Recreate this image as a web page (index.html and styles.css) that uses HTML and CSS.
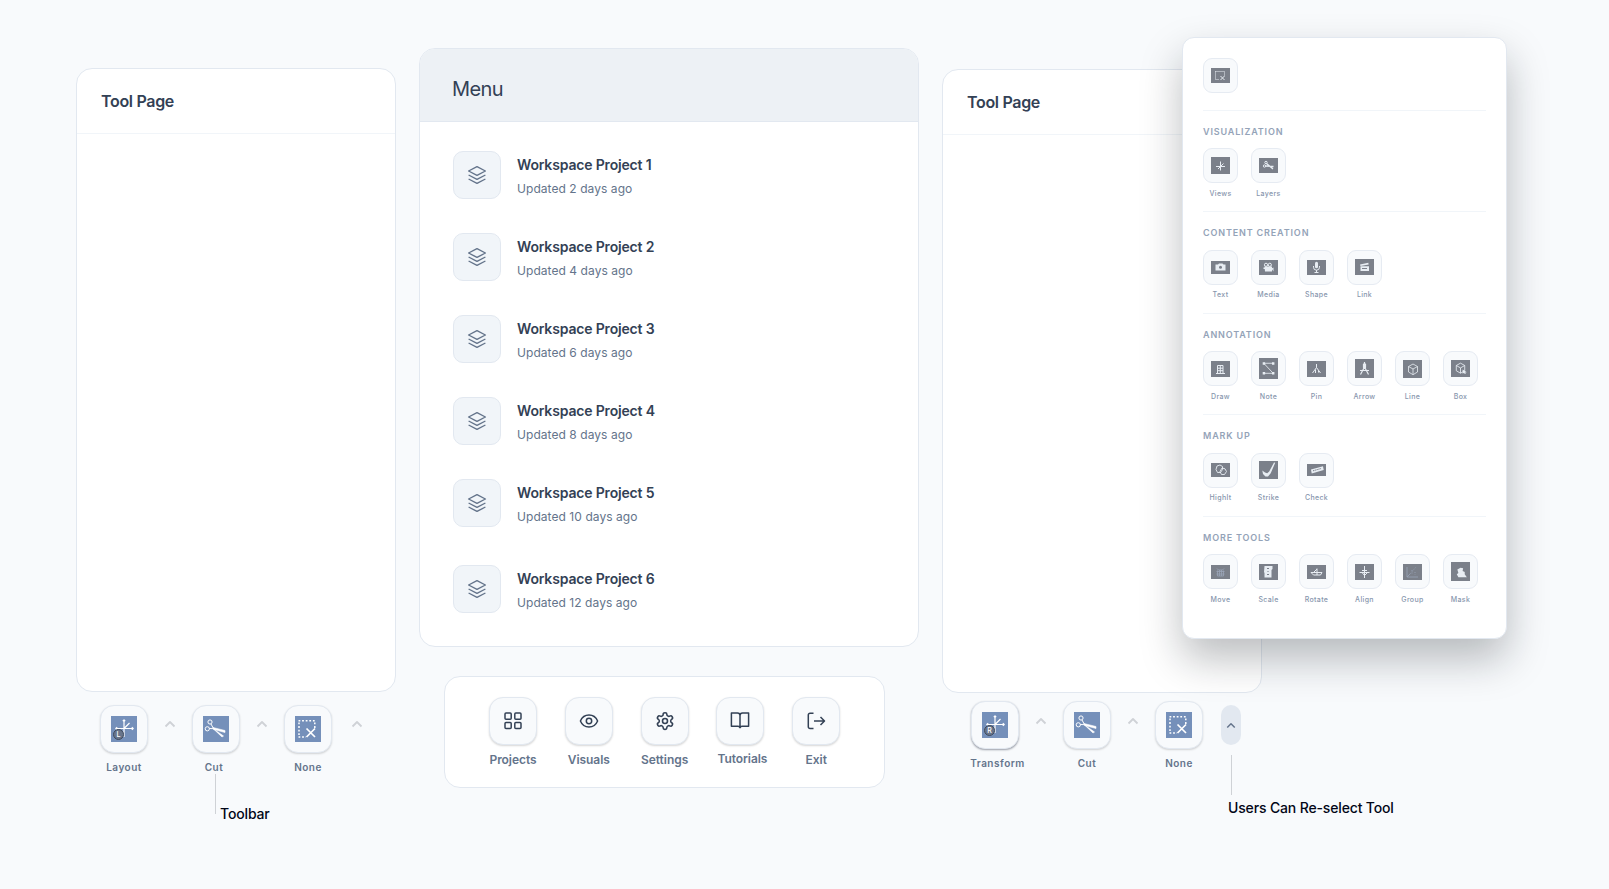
FILE: index.html
```html
<!DOCTYPE html>
<html lang="en">
<head>
  <meta charset="UTF-8">
  <title>Workspace Menu</title>
  <link rel="stylesheet" href="styles.css">
</head>
<body>

<svg class="sprite">
  <symbol id="stack" viewBox="0 0 20 20"><path d="M10 1.6 18.4 6 10 10.4 1.6 6ZM1.6 10 10 14.4 18.4 10M1.6 14 10 18.4 18.4 14"/></symbol>
  <symbol id="chevron" viewBox="0 0 12 8"><path d="M1.5 6.5 6 2l4.500 4.500"/></symbol>
  <symbol id="none" viewBox="0 0 26 26">
    <path d="M3.500 4.800H20.500M3.500 21H11M4 6.500V21M19.800 6.500V12" stroke-dasharray="1.800 1.800" stroke-width="1.5"/>
    <path d="M11.500 12.500 20 21M20 12.500 11.500 21" stroke-width="1.700"/>
  </symbol>
  <symbol id="scissors" viewBox="0 0 26 26">
    <circle cx="7" cy="6" r="2.100"/><circle cx="4.300" cy="12.800" r="2.100"/>
    <path d="M8 8 11 13.500M6.300 12.500 11 12.700"/>
    <path d="M10 11.500 22 14.500 22 16.500 11 13.500ZM10 12.500 20.500 20 19 21Z" fill="currentColor" stroke-width=".6"/>
  </symbol>
  <symbol id="axes" viewBox="0 0 26 26">
    <path stroke-width="1.200" d="M13 4V21M5 12.500H22M13 12.500 18.500 7M11.800 5.200 13 3.800l1.200 1.400M20.800 11.300l1.400 1.200-1.400 1.200M6.200 11.300 4.800 12.500l1.400 1.200"/>
  </symbol>
</svg>

<div class="board">

  <section class="column tool-left">
    <div class="panel tool-page"><h2>Tool Page</h2></div>
    <div class="toolbar">
      <div class="tool"><div class="key"><div class="tile"><svg><use href="#axes"/></svg><span class="hand">L</span></div></div><span class="name">Layout</span></div>
      <svg class="chevron"><use href="#chevron"/></svg>
      <div class="tool cut"><div class="key"><div class="tile"><svg><use href="#scissors"/></svg></div></div><span class="name">Cut</span></div>
      <svg class="chevron"><use href="#chevron"/></svg>
      <div class="tool"><div class="key"><div class="tile"><svg><use href="#none"/></svg></div></div><span class="name">None</span></div>
      <svg class="chevron last"><use href="#chevron"/></svg>
    </div>
    <div class="callout"><i></i><span>Toolbar</span></div>
  </section>

  <section class="column menu-column">
    <div class="panel menu">
      <h1>Menu</h1>
      <ul class="projects">
        <li><div class="thumb"><svg><use href="#stack"/></svg></div><div><h3>Workspace Project 1</h3><p>Updated 2 days ago</p></div></li>
        <li><div class="thumb"><svg><use href="#stack"/></svg></div><div><h3>Workspace Project 2</h3><p>Updated 4 days ago</p></div></li>
        <li><div class="thumb"><svg><use href="#stack"/></svg></div><div><h3>Workspace Project 3</h3><p>Updated 6 days ago</p></div></li>
        <li><div class="thumb"><svg><use href="#stack"/></svg></div><div><h3>Workspace Project 4</h3><p>Updated 8 days ago</p></div></li>
        <li><div class="thumb"><svg><use href="#stack"/></svg></div><div><h3>Workspace Project 5</h3><p>Updated 10 days ago</p></div></li>
        <li><div class="thumb"><svg><use href="#stack"/></svg></div><div><h3>Workspace Project 6</h3><p>Updated 12 days ago</p></div></li>
      </ul>
    </div>
    <nav class="panel dock">
      <a><div class="key"><svg viewBox="0 0 20 20"><rect x="2" y="2" width="6.200" height="6.200" rx="1"/><rect x="11.800" y="2" width="6.200" height="6.200" rx="1"/><rect x="2" y="11.400" width="6.200" height="6.200" rx="1"/><rect x="11.800" y="11.400" width="6.200" height="6.200" rx="1"/></svg></div><span>Projects</span></a>
      <a><div class="key"><svg viewBox="0 0 20 20"><path d="M1.400 10C3 6.200 6.200 4 10 4s7 2.200 8.600 6c-1.600 3.800-4.800 6-8.600 6s-7-2.200-8.600-6Z"/><circle cx="10" cy="10" r="2.700"/></svg></div><span>Visuals</span></a>
      <a><div class="key"><svg viewBox="0 0 24 24"><path stroke-width="1.900" d="M12.220 2h-.44a2 2 0 0 0-2 2v.18a2 2 0 0 1-1 1.730l-.43.25a2 2 0 0 1-2 0l-.15-.08a2 2 0 0 0-2.730.73l-.22.38a2 2 0 0 0 .73 2.730l.15.1a2 2 0 0 1 1 1.720v.51a2 2 0 0 1-1 1.740l-.15.09a2 2 0 0 0-.73 2.730l.22.38a2 2 0 0 0 2.730.73l.15-.08a2 2 0 0 1 2 0l.43.25a2 2 0 0 1 1 1.730V20a2 2 0 0 0 2 2h.44a2 2 0 0 0 2-2v-.18a2 2 0 0 1 1-1.730l.43-.25a2 2 0 0 1 2 0l.15.08a2 2 0 0 0 2.730-.73l.22-.39a2 2 0 0 0-.73-2.730l-.15-.08a2 2 0 0 1-1-1.740v-.5a2 2 0 0 1 1-1.740l.15-.09a2 2 0 0 0 .73-2.730l-.22-.38a2 2 0 0 0-2.730-.73l-.15.08a2 2 0 0 1-2 0l-.43-.25a2 2 0 0 1-1-1.730V4a2 2 0 0 0-2-2z"/><circle cx="12" cy="12" r="3" stroke-width="1.900"/></svg></div><span>Settings</span></a>
      <a class="tutorials"><div class="key"><svg viewBox="0 0 20 20"><path d="M10 4.500C10 3 9 2 7.500 2H1.400v13.300h6.400c1.300 0 2.200.8 2.200 2M10 4.500C10 3 11 2 12.500 2h6.100v13.300h-6.400c-1.300 0-2.200.8-2.200 2M10 4.500v12.800"/></svg></div><span>Tutorials</span></a>
      <a><div class="key"><svg viewBox="0 0 20 20"><path d="M7.500 17.500H4a1.700 1.700 0 0 1-1.700-1.700V3.900A1.700 1.700 0 0 1 4 2.200h3.500M8 10h10.200M14.500 6l4 4-4 4"/></svg></div><span>Exit</span></a>
    </nav>
  </section>

  <section class="column tool-right">
    <div class="panel tool-page"><h2>Tool Page</h2></div>
    <div class="toolbar">
      <div class="tool transform"><div class="key active"><div class="tile"><svg><use href="#axes"/></svg><span class="hand">R</span></div></div><span class="name">Transform</span></div>
      <svg class="chevron"><use href="#chevron"/></svg>
      <div class="tool"><div class="key"><div class="tile"><svg><use href="#scissors"/></svg></div></div><span class="name">Cut</span></div>
      <svg class="chevron"><use href="#chevron"/></svg>
      <div class="tool"><div class="key"><div class="tile"><svg><use href="#none"/></svg></div></div><span class="name">None</span></div>
      <div class="pill"><svg class="chevron"><use href="#chevron"/></svg></div>
    </div>
    <div class="callout"><i></i><span>Users Can Re-select Tool</span></div>

    <!-- tool picker, opens over the page -->
    <div class="picker">
      <div class="group first">
        <div class="row"><div class="pick"><div class="cell"><svg viewBox="0 0 19 15"><path stroke-dasharray="1 1" d="M4.500 3.500h9v4M4.500 3.500v8h4"/><path d="m9.500 8 4 4m0-4-4 4"/></svg></div></div></div>
      </div>
      <div class="group">
        <h4>Visualization</h4>
        <div class="row">
          <div class="pick"><div class="cell"><svg viewBox="0 0 19 17"><path d="M9.500 4.500v9M5 9.500h9M9.500 9.500l3-3M7 12l2.500-2.500"/></svg></div>Views</div>
          <div class="pick"><div class="cell"><svg viewBox="0 0 19 15"><circle cx="7" cy="4.500" r="1.200"/><circle cx="5.500" cy="8" r="1.200"/><path stroke-width="1.300" d="M7.500 5.500 14 11M6.500 8l8 .5"/></svg></div>Layers</div>
        </div>
      </div>
      <div class="group">
        <h4>Content Creation</h4>
        <div class="row">
          <div class="pick"><div class="cell"><svg viewBox="0 0 19 13"><path class="solid" d="M4.500 3.500h2.500l1-1h3.500l1 1h2v6h-10z"/><circle class="dark" cx="9.500" cy="6.300" r="1.500"/></svg></div>Text</div>
          <div class="pick"><div class="cell"><svg viewBox="0 0 19 15"><circle cx="7" cy="4.800" r="1.600"/><circle cx="10.800" cy="4.800" r="1.600"/><path class="solid" d="M5.500 6.500h7.500V11.500H6zM12.500 8.500l2-1V11.500zM4.500 7.500h2V9h-2z"/></svg></div>Media</div>
          <div class="pick"><div class="cell"><svg viewBox="0 0 19 15"><rect class="solid" x="8" y="1.800" width="3" height="6.500" rx="1.500"/><path d="M6.500 6v1.200a3 3 0 0 0 6 0V6M9.500 10v2.500M7.500 12.500h4"/></svg></div>Shape</div>
          <div class="pick"><div class="cell"><svg viewBox="0 0 19 16"><path class="solid" d="M5.500 7.300H14V12H5.500zM5 5.500 13.300 3.800l.4 1.700-8.200 1.500z"/><path class="cut-line" d="M7 9.500h5"/></svg></div>Link</div>
        </div>
      </div>
      <div class="group">
        <h4>Annotation</h4>
        <div class="row">
          <div class="pick"><div class="cell"><svg viewBox="0 0 19 16"><path d="M6.500 4.500h5.500v8H6.500zM5 12.500h9M9.300 5v7M7 7.200h5M7 9.700h5"/></svg></div>Draw</div>
          <div class="pick"><div class="cell"><svg viewBox="0 0 18 19"><path class="thin" d="M4.500 5h9M4.500 5l9 9.500M4.500 14.500h9"/><path class="solid" d="M3.500 4h2.300v2.300h-2.300zM12.300 4h2.300v2.300h-2.300zM3.500 13.300h2.300v2.300h-2.300zM12.300 13.300h2.300v2.300h-2.300z"/></svg></div>Note</div>
          <div class="pick"><div class="cell"><svg viewBox="0 0 19 16"><path d="M9.500 3v3.500L5.500 12M9.500 6.500l4 5.500M8.500 8.500V12M11.500 9.500v2"/></svg></div>Pin</div>
          <div class="pick"><div class="cell"><svg viewBox="0 0 19 19"><path stroke-width="1.200" d="M9.500 3v5L5.500 15.500M9.500 8l4 7.500M5 11.500h9M8.500 5h2v3.500h-2z"/></svg></div>Arrow</div>
          <div class="pick"><div class="cell"><svg viewBox="0 0 19 18"><path class="thin" d="m10 4 4.500 2.500v5.500L10 14.700 5.500 12V6.500zM5.500 6.500 10 9l4.500-2.500M10 9v5.500"/></svg></div>Line</div>
          <div class="pick"><div class="cell"><svg viewBox="0 0 18 16"><path class="thin" d="m9 3 4 2.200v5L9 12.500l-4-2.300v-5zM5 5.200l4 2.300 4-2.300M9 7.500v5"/><path class="solid" d="m11 9 4 2.500-1.600.3.600 1.500h-1l-.6-1.200L11 13z"/></svg></div>Box</div>
        </div>
      </div>
      <div class="group">
        <h4>Mark up</h4>
        <div class="row">
          <div class="pick"><div class="cell"><svg viewBox="0 0 19 14"><path stroke-width=".9" d="M6 3 9 2l2.500 1.500v3L9.500 9.500H6.500L5 6.500zM11 5l3 .8L15.500 8.500l-2 3h-3L9 8.500z"/></svg></div>Highlt</div>
          <div class="pick"><div class="cell"><svg viewBox="0 0 19 18"><path class="solid" d="m15 1.500 1.200.3-4.500 10.500L9 15.500H6.500L4 13l-.7-3.500L6 11.500l2.200.7 2-1.700z"/></svg></div>Strike</div>
          <div class="pick"><div class="cell"><svg viewBox="0 0 19 12"><path class="solid" d="m4 5.500 12-3.200.7 3.700-12 3.500z"/><path class="cut-line" stroke-dasharray="1.500 .7" d="m6 6.800 8.500-2.400"/></svg></div>Check</div>
        </div>
      </div>
      <div class="group">
        <h4>More Tools</h4>
        <div class="row">
          <div class="pick"><div class="cell"><svg viewBox="0 0 19 14"><path class="faint" d="M6 3.500 7.500 5h4L13 3.500M5.500 6.500h8M5.500 9h8M6.500 5.500V11h6V5.500M8.500 5v6M10.500 5v6"/></svg></div>Move</div>
          <div class="pick"><div class="cell"><svg viewBox="0 0 19 16"><path class="solid" d="M5.500 2h8v3l-1 1v7.500H5.500V9L5 8z"/><path class="cut-line" d="M8 4.500h2M9 7v1M8 10.500h2"/></svg></div>Scale</div>
          <div class="pick"><div class="cell"><svg viewBox="0 0 19 14"><path d="M4 7.500h11L13.500 10H6.500zM10 3.500v6.500M10 4 6.500 7.500"/></svg></div>Rotate</div>
          <div class="pick"><div class="cell"><svg viewBox="0 0 19 16"><path d="M9.500 2v12M4.500 8.500h10M7 8.500l2.500 3 3-3M7 6.500h5"/></svg></div>Align</div>
          <div class="pick"><div class="cell"><svg viewBox="0 0 19 16"><path class="faint" d="M4 3v10h11M4 13l3-3"/><path class="faint" stroke-dasharray="1 1.500" d="M7 10l6-7M9 6v5M12 8v3"/></svg></div>Group</div>
          <div class="pick"><div class="cell"><svg viewBox="0 0 18 18"><path class="solid" d="M6 7 9 5.500l2.500.5-.5 2.500 2 1v2l2 3H7L5.500 11.500l1.500-1z"/></svg></div>Mask</div>
        </div>
      </div>
    </div>
  </section>

</div>

</body>
</html>
```
FILE: styles.css
```css
* {
  box-sizing: border-box;
  margin: 0;
  padding: 0;
}

body {
  height: 889px;
  overflow: hidden;
  background: #f8fafc;
  font-family: Inter, "Liberation Sans", sans-serif;
  color: #334155;
}

svg {
  display: block;
  fill: none;
  stroke: currentColor;
  stroke-linejoin: round;
}

.sprite {
  display: none;
}

.board {
  display: flex;
  align-items: flex-start;
  padding: 48px 0 0 76px;
}

.column {
  flex: none;
}

.tool-left {
  width: 320px;
  margin-top: 20px;
}

.menu-column {
  width: 500px;
  margin-left: 23px;
}

.tool-right {
  position: relative;
  width: 320px;
  margin: 21px 0 0 23px;
}

.panel {
  background: #fff;
  border: 1px solid #e2e8f0;
  border-radius: 16px;
}

.tool-page {
  height: 624px;
}

.tool-page h2 {
  height: 65px;
  padding: 0 24px;
  border-bottom: 1px solid #f1f5f9;
  font-size: 16px;
  font-weight: 600;
  line-height: 64px;
  letter-spacing: -0.32px;
}

/* toolbar */
.toolbar {
  display: flex;
  align-items: flex-start;
  padding: 13px 0 0 24px;
}

.tool-right .toolbar {
  padding: 8px 0 0 29px;
}

.tool {
  display: flex;
  flex-direction: column;
  align-items: center;
  width: 48px;
}

.key {
  flex: none;
  display: grid;
  place-items: center;
  width: 48px;
  height: 48px;
  border: 1px solid #e2e8f0;
  border-radius: 14px;
  background: #f8fafc;
  box-shadow: 0 1px 2px rgba(0, 0, 0, 0.16);
}

.key.active {
  box-shadow: 0 1px 2px rgba(15, 23, 42, 0.4);
}

.tile {
  position: relative;
  width: 26px;
  height: 26px;
  background: #7590ba;
  color: #fff;
}

.tile svg {
  width: 26px;
  height: 26px;
}

.hand {
  position: absolute;
  left: 2px;
  bottom: 2px;
  width: 11px;
  height: 11px;
  border: 1px solid #3f4a5c;
  border-radius: 50%;
  background: #68758b;
  font-size: 7px;
  font-weight: 500;
  line-height: 9px;
  text-align: center;
}

.name {
  margin-top: 7px;
  font-size: 10px;
  font-weight: 600;
  line-height: 14px;
  letter-spacing: 0.5px;
  color: #64748b;
}

.tool.cut .name {
  margin-left: -4px;
}

.tool.transform .name {
  margin-left: 5px;
}

.chevron {
  flex: none;
  width: 12px;
  height: 8px;
  margin: 15px 16px 0;
  color: #cfd2d6;
  stroke-width: 1.8;
}

.tool-right .chevron {
  margin-top: 16px;
}

.chevron.last {
  margin-left: 19px;
}

.pill {
  display: grid;
  place-items: center;
  width: 20px;
  height: 40px;
  margin: 4px 0 0 18px;
  border-radius: 10px;
  background: #e2e8f0;
}

.pill .chevron,
.tool-right .pill .chevron {
  width: 10px;
  height: 7px;
  margin: 0;
  color: #64748b;
}

.callout {
  display: flex;
  align-items: flex-end;
  margin: 0 0 0 139px;
  font-size: 14px;
  font-weight: 500;
  line-height: 17px;
  letter-spacing: -0.15px;
  color: #020617;
}

.callout i {
  width: 1px;
  height: 40px;
  margin-right: 4px;
  background: #cfd2d6;
}

.callout span {
  margin-bottom: -8px;
}

.tool-right .callout {
  flex-direction: column;
  align-items: flex-start;
  margin: -15px -200px 0 289px;
}

.tool-right .callout span {
  margin: 4px 0 0 -3px;
  white-space: nowrap;
}

/* menu */
.menu {
  height: 599px;
  overflow: hidden;
}

.menu h1 {
  height: 73px;
  padding: 8px 32px 0;
  border-bottom: 1px solid #e2e8f0;
  background: #edf1f5;
  font-size: 20px;
  font-weight: 400;
  line-height: 64px;
  letter-spacing: -0.6px;
}

.projects {
  display: grid;
  gap: 34px;
  padding: 29px 33px;
  list-style: none;
}

.projects li {
  display: flex;
  gap: 16px;
  height: 48px;
}

.projects li:last-child {
  margin-top: 4px;
}

.thumb {
  display: grid;
  place-items: center;
  width: 48px;
  height: 48px;
  border: 1px solid #e2e8f0;
  border-radius: 10px;
  background: #f1f5f9;
  color: #64748b;
}

.thumb svg {
  width: 20px;
  height: 20px;
  stroke-width: 1.4;
}

.projects h3 {
  margin-top: 4px;
  font-size: 14px;
  font-weight: 600;
  line-height: 20px;
  letter-spacing: -0.17px;
}

.projects p {
  margin-top: 6px;
  font-size: 12px;
  line-height: 16px;
  letter-spacing: 0.06px;
  color: #64748b;
}

/* dock under the menu */
.dock {
  display: flex;
  gap: 27.800px;
  width: 441px;
  height: 112px;
  margin: 29px 0 0 25px;
  padding: 20px 44px;
}

.dock a {
  display: flex;
  flex-direction: column;
  align-items: center;
  width: 48px;
}

.dock svg {
  width: 20px;
  height: 20px;
  stroke-width: 1.5;
}

.dock span {
  margin-top: 7px;
  font-size: 12px;
  font-weight: 600;
  line-height: 16px;
  letter-spacing: -0.05px;
  color: #64748b;
}

.dock .tutorials span {
  margin: 6px 0 0 4px;
}

/* picker */
.picker {
  position: absolute;
  top: -32px;
  left: 240px;
  width: 325px;
  height: 602px;
  padding: 20px;
  border: 1px solid #e2e8f0;
  border-radius: 12px;
  background: #fff;
  box-shadow: 0 20px 42px rgba(15, 20, 30, 0.28);
}

.group {
  height: 101.500px;
  padding-top: 15px;
  border-top: 1px solid #f1f5f9;
}

.group.first {
  height: 51.500px;
  padding: 0;
  border: 0;
}

.group h4 {
  font-size: 9px;
  font-weight: 600;
  line-height: 12px;
  letter-spacing: 0.85px;
  text-transform: uppercase;
  color: #94a3b8;
}

.row {
  display: flex;
  gap: 13px;
}

h4 + .row {
  margin-top: 10.500px;
}

.pick {
  width: 35px;
  font-size: 7px;
  font-weight: 500;
  line-height: 10px;
  letter-spacing: 0.35px;
  text-align: center;
  color: #8796ad;
}

.cell {
  display: grid;
  place-items: center;
  width: 35px;
  height: 35px;
  margin-bottom: 5.500px;
  border: 1px solid #e6ebf2;
  border-radius: 9px;
  background: #f8fafc;
  color: #e8edf3;
}

.cell svg {
  width: 19px;
  background: #7b808a;
  stroke-width: 1;
}

.cell .solid {
  fill: currentColor;
  stroke: none;
}

.cell .dark {
  fill: #7b808a;
  stroke: none;
}

.cell .cut-line {
  stroke: #7b808a;
}

.cell .thin {
  stroke-width: 0.8;
}

.cell .faint {
  stroke: #9aa5b8;
  stroke-width: 0.8;
}
```
